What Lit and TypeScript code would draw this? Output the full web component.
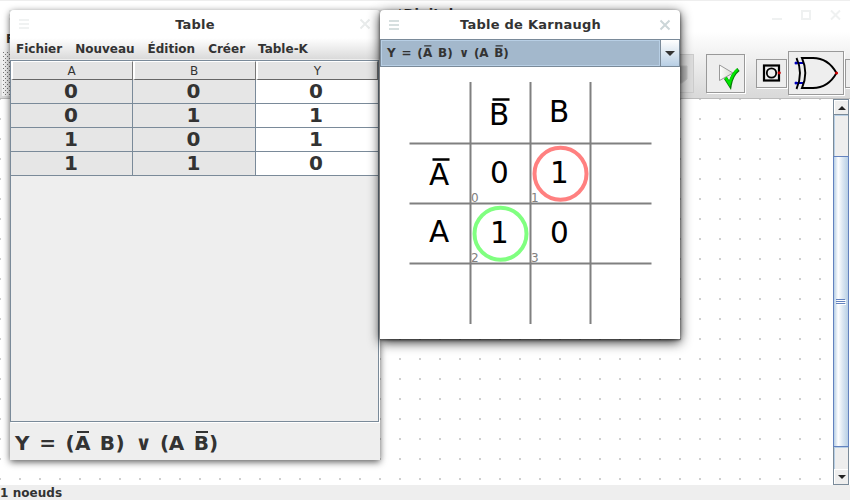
import { LitElement, html, svg, css } from "lit";
import { customElement, property } from "lit/decorators.js";

const TOKENS: Array<[string, number]> = [
  ["Y", 0], ["=", 24.3], ["(", 50.5], ["A", 60], ["B", 84.8], [")", 100.5],
  ["∨", 120.5], ["(", 145], ["A", 153.8], ["B", 178.8], [")", 194],
];

@customElement("logic-formula")
export class LogicFormula extends LitElement {
  @property({ type: Number }) scale = 1;
  static styles = css`
    :host { display: block; }
    svg { display: block; overflow: visible; }
    text { font: bold 20px "DejaVu Sans", sans-serif; fill: #333; }
  `;
  render() {
    const s = this.scale;
    return html`<svg width=${204 * s} height=${26 * s} viewBox="0 0 204 26">
      ${TOKENS.map(([t, x]) => svg`<text x=${x} y="21">${t}</text>`)}
      <path d="M62 3H74M181 3H193" stroke="#333" stroke-width="2" />
    </svg>`;
  }
}

@customElement("table-window")
export class TableWindow extends LitElement {
  static styles = css`
    :host { display: flex; flex-direction: column; box-sizing: border-box; background: #eee; color: #333;
      font: bold 12px "DejaVu Sans", sans-serif; border-radius: 4px 4px 0 0; box-shadow: 0 2px 7px rgba(0,0,0,.65); }
    .title { height: 28px; display: flex; align-items: center; justify-content: space-between; background: #fff;
      border-radius: 4px 4px 0 0; font-size: 13px; letter-spacing: .2px; padding: 0 9px; }
    .title span { padding-left: 2px; }
    .title svg { display: block; }
    .menu { height: 21px; display: flex; gap: 13px; padding-left: 6px; line-height: 23px; white-space: nowrap;
      background: linear-gradient(#fff, #dadada); border-bottom: 1px solid #eee; }
    .pane { flex: 1; border: 1px solid #7a8a99; margin-right: 1px; box-shadow: 1px 1px #fff; }
    .grid { display: grid; grid-template-columns: 122px 123px 122px; }
    .head { box-sizing: border-box; height: 19px; font-weight: normal; text-align: center; line-height: 18px; background: #e4e4e4;
      border: solid; border-width: 1px 1px 1px 2px; border-color: #fff #777 #666 #fff; padding-right: 2px; }
    .head:nth-child(3) { padding-right: 0; }
    .cell { box-sizing: border-box; height: 24px; text-align: center; font-size: 20px; line-height: 23px;
      background: #e6e6e6; border-bottom: 1px solid #7a8a99; border-right: 1px solid #7a8a99; padding-right: 1px; }
    .out { background: #fff; border-right: 0; padding-right: 2px; }
    .foot { height: 38px; padding: 7px 0 0 5px; display: flex; box-sizing: border-box; }
  `;
  render() {
    const rows = [[0, 0, 0], [0, 1, 1], [1, 0, 1], [1, 1, 0]];
    return html`
      <div class="title">
        <svg width="10" height="10"><path d="M0 1H10M0 5H10M0 9H10" stroke="#f0f2f2" stroke-width="2" /></svg>
        <span>Table</span>
        <svg width="12" height="12"><path d="M1.5 1.5L10.5 10.5M10.5 1.5L1.5 10.5" stroke="#e8ebeb" stroke-width="2" /></svg>
      </div>
      <div class="menu">${["Fichier", "Nouveau", "Édition", "Créer", "Table-K"].map((m) => html`<span>${m}</span>`)}</div>
      <div class="pane"><div class="grid">
        ${["A", "B", "Y"].map((h) => html`<div class="head">${h}</div>`)}
        ${rows.map((r) => r.map((v, i) => html`<div class="cell ${i === 2 ? "out" : ""}">${v}</div>`))}
      </div></div>
      <div class="foot"><logic-formula></logic-formula></div>`;
  }
}

@customElement("karnaugh-window")
export class KarnaughWindow extends LitElement {
  static styles = css`
    :host { display: flex; flex-direction: column; background: #fff; color: #333; border-radius: 4px 4px 0 0;
      font: bold 13px "DejaVu Sans", sans-serif; box-shadow: 0 3px 12px rgba(0,0,0,.85), 0 1px 3px rgba(0,0,0,.6); }
    .title { height: 29px; display: flex; align-items: center; justify-content: space-between; padding: 0 9px; box-sizing: border-box; }
    .title span { letter-spacing: .24px; padding-left: 3px; }
    .title svg, .map { display: block; }
    .combo { display: flex; height: 28px; box-sizing: border-box; border: 1px solid #7a8a99; }
    .value { flex: 1; border: 1px solid #b8cfe5; background: #a3b8cc; padding: 3px 0 0 5px; box-sizing: border-box; }
    .arrow { width: 19px; box-sizing: border-box; border-left: 1px solid #7a8a99; background: linear-gradient(#fff, #dfe9f2 45%, #b8cfe5);
      display: flex; align-items: center; justify-content: center; }
    .map text { font: 29.5px "DejaVu Sans", sans-serif; text-anchor: middle; fill: #000; }
    .map .index { font-size: 12px; text-anchor: start; fill: #808080; }
  `;
  render() {
    const labels: Array<[string, number, number]> = [
      ["B", 119.2, 57.8], ["B", 179.2, 55], ["A", 59.2, 117.8], ["A", 59.2, 175],
      ["0", 119.5, 116], ["1", 179.5, 116], ["1", 119.5, 176], ["0", 179.5, 176],
    ];
    const index: Array<[string, number, number]> = [["0", 91, 135], ["1", 151, 135], ["2", 91, 195], ["3", 151, 195]];
    return html`
      <div class="title">
        <svg width="10" height="10"><path d="M0 1H10M0 5H10M0 9H10" stroke="#d6dfdf" stroke-width="2" /></svg>
        <span>Table de Karnaugh</span>
        <svg width="12" height="12"><path d="M1.5 1.5L10.5 10.5M10.5 1.5L1.5 10.5" stroke="#ccd6d8" stroke-width="2" /></svg>
      </div>
      <div class="combo">
        <div class="value"><logic-formula scale="0.6"></logic-formula></div>
        <div class="arrow"><svg width="10" height="5"><path d="M0 0H10L5 5Z" fill="#333" /></svg></div>
      </div>
      <svg class="map" width="300" height="272">
        <path d="M90.5 15V257M150.5 15V257M210.5 15V257M29.5 76.5H271.5M29.5 136.5H271.5M29.5 196.5H271.5" fill="none" stroke="#808080" stroke-width="2" />
        ${index.map(([t, x, y]) => svg`<text class="index" x=${x} y=${y}>${t}</text>`)}
        ${labels.map(([t, x, y]) => svg`<text x=${x} y=${y}>${t}</text>`)}
        <path d="M112.5 32.5H129.5M52.5 92.5H69.5" stroke="#000" stroke-width="2.6" />
        <circle cx="180.5" cy="106.7" r="26" fill="none" stroke="#ff8080" stroke-width="4" />
        <circle cx="120.5" cy="166.7" r="26" fill="none" stroke="#80ff80" stroke-width="4" />
      </svg>`;
  }
}

@customElement("app-root")
export class AppRoot extends LitElement {
  static styles = css`
    :host { display: flex; flex-direction: column; position: relative; width: 850px; height: 500px; overflow: hidden;
      background: #fff; color: #333; font: bold 12px "DejaVu Sans", sans-serif; }
    .title { height: 28px; box-sizing: border-box; border-top: 1px solid #eee; display: flex; align-items: center;
      justify-content: space-between; padding: 0 9px; font-size: 13px; }
    .title svg { display: block; }
    .title .left { margin-right: 62px; }
    .title span { padding-bottom: 3px; letter-spacing: .2px; }
    .chrome { height: 71px; box-sizing: border-box; background: linear-gradient(#fff 5%, #dadada 96%); border-bottom: 1px solid #bbb;
      display: flex; flex-direction: column; }
    .menu { height: 20px; line-height: 22px; padding-left: 6px; }
    .tools { flex: 1; display: flex; align-items: center; }
    .grip { width: 9px; height: 44px; margin: 2px auto 0 2px; }
    .btn { box-sizing: border-box; border: 1px solid #999; background: #eee; box-shadow: 1px 1px #fff;
      display: flex; align-items: center; justify-content: center; flex: none; }
    .btn svg, .grip svg { display: block; }
    .btn svg { overflow: visible; }
    .off { width: 39px; height: 39px; border-color: #ccc; background: #ddd; box-shadow: none; margin-right: 12px; }
    .play { width: 39px; height: 39px; margin-right: 11px; }
    .small { width: 31px; height: 29px; margin-right: 1px; }
    .xor { width: 56px; height: 44px; margin-right: 1px; }
    .cut { width: 5px; height: 29px; border-right: 0; }
    .body { flex: 1; display: flex; min-height: 0; }
    .canvas { flex: 1; overflow: hidden; }
    .canvas svg { display: block; }
    .scroll { width: 16px; margin-right: 1px; box-sizing: border-box; border: 1px solid #7a8a99;
      display: flex; flex-direction: column; background: #eee; }
    .step { height: 15px; box-sizing: border-box; border: solid #fff; border-width: 1px 0 0 1px; display: flex; align-items: center; justify-content: center; }
    .track { border: solid #b8cfe5; border-width: 1px 0 0 1px; outline: 1px solid #7a8a99; box-sizing: border-box; }
    .above { height: 41px; }
    .below { flex: 1; }
    .thumb { height: 291px; box-sizing: border-box; margin: 0 -1px; border: 1px solid #6382bf; position: relative;
      background: linear-gradient(90deg, #b8cfe5, #fff 30%, #dde8f3 60%, #b8cfe5);
      display: flex; align-items: center; justify-content: center; }
    .status { height: 15px; background: #eee; line-height: 16px; letter-spacing: .05px; }
    table-window { position: absolute; left: 10px; top: 10px; width: 370px; height: 450px; }
    karnaugh-window { position: absolute; left: 380px; top: 10px; width: 300px; height: 329px; }
  `;
  render() {
    return html`
      <div class="title">
        <svg class="left" width="10" height="10"><path d="M0 1H10M0 5H10M0 9H10" stroke="#f0f2f2" stroke-width="2" /></svg>
        <span>*Digital</span>
        <svg width="72" height="12" fill="none" stroke="#eff1f1" stroke-width="2">
          <path d="M3 10H13M62 1.5L71 10.5M71 1.5L62 10.5" /><rect x="33" y="2" width="8" height="8" />
        </svg>
      </div>
      <div class="chrome">
        <div class="menu">F</div>
        <div class="tools">
          <div class="grip"><svg width="9" height="44">
            <defs><pattern id="grip" width="4" height="4" patternUnits="userSpaceOnUse"><rect width="4" height="4" fill="#f3f3f3" /><path d="M1 0h1v1h-1zM3 2h1v1h-1z" fill="#777" /></pattern></defs>
            <rect width="9" height="44" fill="url(#grip)" />
          </svg></div>
          <div class="btn off"><svg width="24" height="24"><path d="M0 4L18 12L0 22M15 5H24V18L19 22H15V18L18 14L15 11Z" fill="#bbb" stroke="#c4c4c4" /></svg></div>
          <div class="btn play"><svg width="24" height="24">
            <defs><linearGradient id="g"><stop stop-color="#fff" /><stop offset="1" stop-color="#d8d8d0" /></linearGradient></defs>
            <path d="M5.5 4V19.5L19 12Z" fill="url(#g)" stroke="#999" />
            <path d="M11.5 17L16 24C17 18 20 12 24.5 8.5" fill="none" stroke="#087a08" stroke-width="3.6" />
            <path d="M11.5 16.5L15.5 23C17 17 20 11.5 23.5 8.5" fill="none" stroke="#00e800" stroke-width="2.4" />
          </svg></div>
          <div class="btn small"><svg width="18" height="18">
            <rect x="1" y="1.5" width="15" height="15" fill="none" stroke="#000" stroke-width="2.2" />
            <circle cx="8.5" cy="9" r="4.7" fill="none" stroke="#000" stroke-width="1.8" /><circle cx="16.2" cy="8.8" r="1.6" fill="#c00" />
          </svg></div>
          <div class="btn xor"><svg width="44" height="34" fill="none" stroke="#000" stroke-width="1.9">
            <path d="M1 7H9M1 27H9" stroke="#00b" />
            <path d="M8 2Q14.6 17 8 32H19Q34 32 42.5 17Q34 2 19 2ZM2.5 2Q9.5 17 2.5 33" />
            <circle cx="2" cy="7" r="1.5" fill="#00b" stroke="none" /><circle cx="2" cy="27" r="1.5" fill="#00b" stroke="none" />
            <circle cx="42.5" cy="17" r="1.6" fill="#c00" stroke="none" />
          </svg></div>
          <div class="btn cut"></div>
        </div>
      </div>
      <div class="body">
        <div class="canvas"><svg width="833" height="386">
          <defs><pattern id="dots" x="-1" y="-1" width="20" height="20" patternUnits="userSpaceOnUse"><rect width="20" height="20" fill="#fff" /><rect width="2" height="2" fill="#d0d0d0" /></pattern></defs>
          <rect width="833" height="386" fill="url(#dots)" />
        </svg></div>
        <div class="scroll">
          <div class="step"><svg width="8" height="4"><path d="M0 4L4 0L8 4Z" fill="#222" /></svg></div>
          <div class="track above"></div>
          <div class="thumb"><svg width="10" height="6"><path d="M1 1.5H10M1 3.5H10M1 5.5H10" stroke="#fff" /><path d="M0 .5H9M0 2.5H9M0 4.5H9" stroke="#6382bf" /></svg></div>
          <div class="track below"></div>
          <div class="step"><svg width="8" height="4"><path d="M0 0L4 4L8 0Z" fill="#222" /></svg></div>
        </div>
      </div>
      <div class="status">1 noeuds</div>
      <table-window></table-window>
      <karnaugh-window></karnaugh-window>`;
  }
}
